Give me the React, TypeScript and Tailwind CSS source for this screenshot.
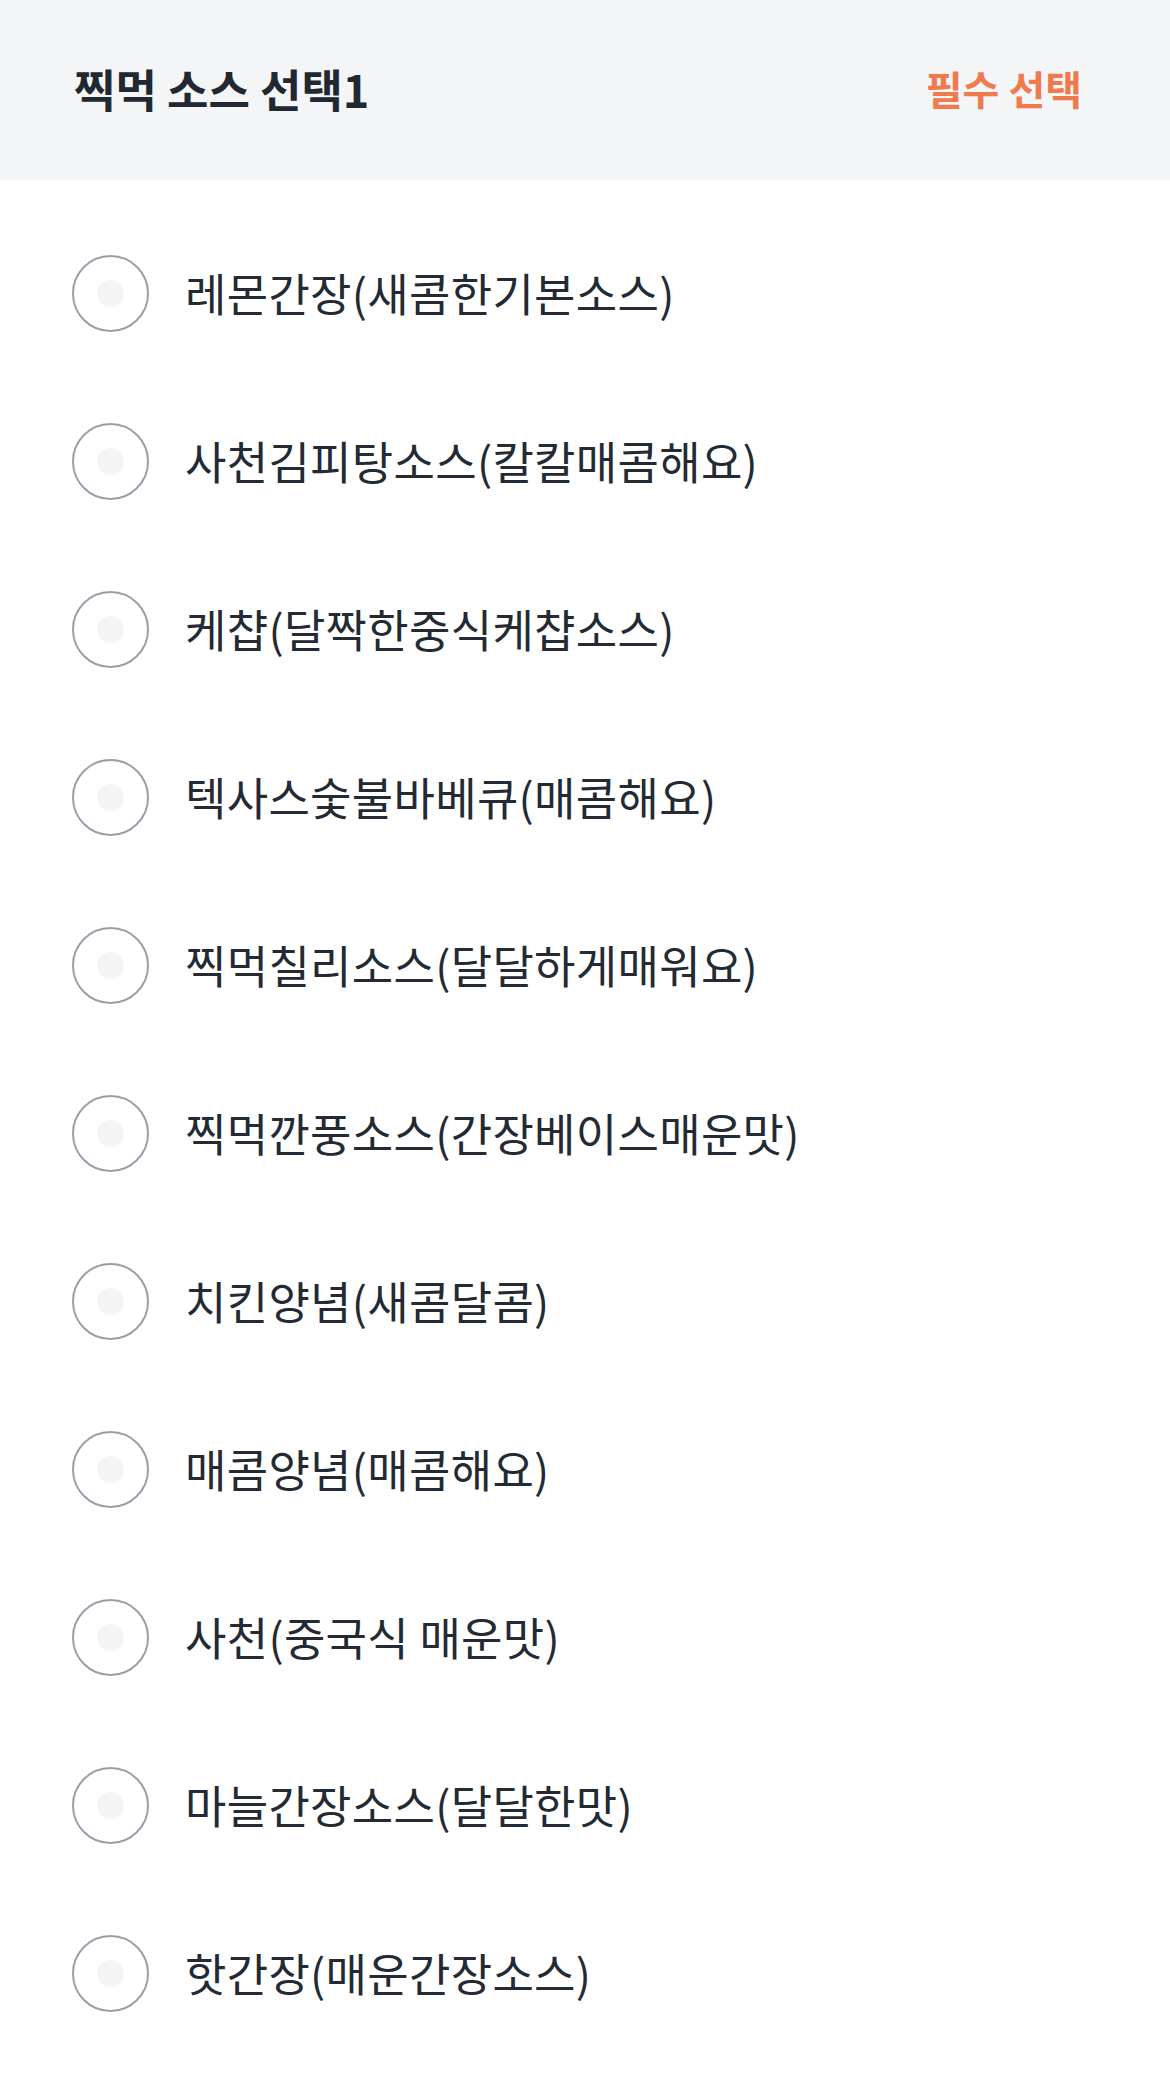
import React from "react";

const items = [
  "레몬간장(새콤한기본소스)",
  "사천김피탕소스(칼칼매콤해요)",
  "케챱(달짝한중식케챱소스)",
  "텍사스숯불바베큐(매콤해요)",
  "찍먹칠리소스(달달하게매워요)",
  "찍먹깐풍소스(간장베이스매운맛)",
  "치킨양념(새콤달콤)",
  "매콤양념(매콤해요)",
  "사천(중국식 매운맛)",
  "마늘간장소스(달달한맛)",
  "핫간장(매운간장소스)",
];

export default function App() {
  return (
    <div
      className="w-[1170px] min-h-[2095px] bg-white"
      style={{ fontFamily: '"Noto Sans CJK KR", "Noto Sans", sans-serif' }}
    >
      <div className="h-[180px] bg-[#f4f5f7] flex items-center justify-between pl-[74px] pr-[88px] pb-[4px]">
        <div className="text-[45px] font-bold text-[#222831] leading-none">찍먹 소스 선택1</div>
        <div className="text-[40px] font-bold text-[#ee7a4e] leading-none">필수 선택</div>
      </div>
      <div className="pt-[29px]">
        {items.map((t) => (
          <div key={t} className="h-[168px] flex items-center pl-[72px]">
            <div className="w-[77px] h-[77px] rounded-full border-[2.5px] border-[#979fa9] flex items-center justify-center shrink-0">
              <div className="w-[27px] h-[27px] rounded-full bg-[#f3f4f6]" />
            </div>
            <div className="ml-[36px] text-[45px] text-[#232a33] leading-none tracking-[0.3px] pb-[2px]">{t}</div>
          </div>
        ))}
      </div>
    </div>
  );
}
